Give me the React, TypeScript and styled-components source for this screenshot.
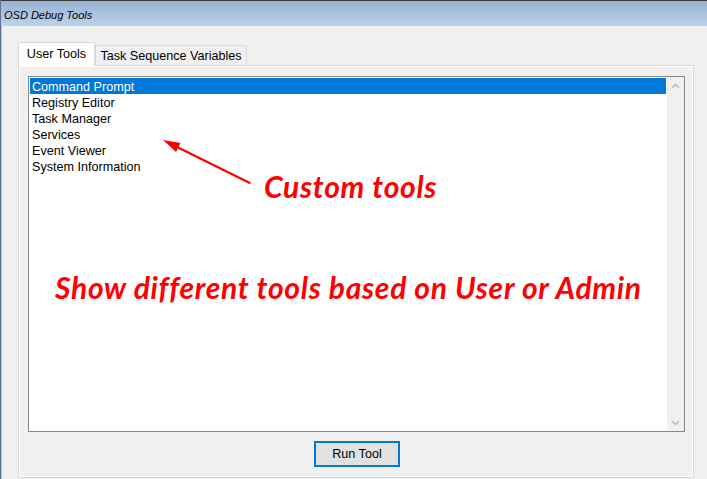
import React from 'react';
import styled, { createGlobalStyle } from 'styled-components';

const Global = createGlobalStyle`
  html, body { margin: 0; padding: 0; background: #f0f0f0; }
  body { font-family: "Liberation Sans", Arial, sans-serif; }
  * { box-sizing: border-box; }
`;

const Window = styled.div`
  position: relative;
  width: 707px;
  height: 479px;
  display: flex;
  flex-direction: column;
  background: #f0f0f0;
  border-left: 1px solid #5d7391;
  overflow: hidden;
`;

const TitleBar = styled.div`
  height: 26px;
  flex: none;
  border-top: 1px solid #3a3a3a;
  background: linear-gradient(#98b2d2, #bdd3eb);
  display: flex;
  align-items: center;
  padding: 2px 0 0 3px;
  font-style: italic;
  font-size: 11px;
  color: #000;
`;

const Body = styled.div`
  flex: 1;
  display: flex;
  flex-direction: column;
  padding: 16px 13px 1px 17px;
  box-shadow: inset 1px 0 0 #a9c1de;
`;

const TabStrip = styled.div`
  display: flex;
  align-items: flex-end;
  height: 24px;
  margin-bottom: -1px;
  position: relative;
  z-index: 1;
`;

const Tab = styled.div<{ $active?: boolean; $w: number }>`
  width: ${p => p.$w}px;
  height: ${p => (p.$active ? 24 : 20)}px;
  margin-bottom: ${p => (p.$active ? 0 : 1)}px;
  padding-top: ${p => (p.$active ? 3 : 2)}px;
  border: 1px solid #d9d9d9;
  border-bottom: none;
  background: ${p => (p.$active ? '#ffffff' : '#f0f0f0')};
  font-size: 12.6px;
  line-height: 16px;
  text-align: center;
  color: #000;
  white-space: nowrap;
`;

const Panel = styled.div`
  flex: 1;
  display: flex;
  flex-direction: column;
  gap: 9px;
  border: 1px solid #d9d9d9;
  box-shadow: inset 0 0 0 1px #ffffff;
  padding: 10px 8px 10px 9px;
  background: #f0f0f0;
`;

const ListBox = styled.div`
  flex: 1;
  display: flex;
  border: 1px solid #828790;
  background: #ffffff;
`;

const Items = styled.div`
  flex: 1;
  padding: 1px;
  display: flex;
  flex-direction: column;
`;

const Item = styled.div<{ $selected?: boolean }>`
  height: 16px;
  line-height: 16px;
  padding: 1px 0 0 2px;
  font-size: 12.6px;
  color: ${p => (p.$selected ? '#ffffff' : '#000000')};
  background: ${p => (p.$selected ? '#0078d7' : 'transparent')};
  white-space: nowrap;
  overflow: hidden;
`;

const ScrollBar = styled.div`
  width: 17px;
  flex: none;
  background: #f0f0f0;
  display: flex;
  flex-direction: column;
  justify-content: space-between;
`;

const ScrollButton = styled.div`
  height: 17px;
  display: flex;
  align-items: center;
  justify-content: center;
`;

const RunButton = styled.button`
  align-self: center;
  width: 86px;
  height: 26px;
  flex: none;
  border: 2px solid #0078d7;
  background: #e1e1e1;
  font-family: "Liberation Sans", Arial, sans-serif;
  font-size: 12.6px;
  color: #000;
  padding: 0;
  margin-right: -1px;
`;

const Note = styled.div<{ $x: number; $y: number }>`
  position: absolute;
  left: ${p => p.$x}px;
  top: ${p => p.$y}px;
  font-family: Lato, "Open Sans", sans-serif;
  font-weight: 700;
  font-style: italic;
  font-size: 30px;
  line-height: 30px;
  letter-spacing: 0.7px;
  color: #ff0000;
  white-space: nowrap;
  z-index: 2;
`;

const ArrowSvg = styled.svg`
  position: absolute;
  left: 150px;
  top: 125px;
  z-index: 2;
`;

const tools = [
  'Command Prompt',
  'Registry Editor',
  'Task Manager',
  'Services',
  'Event Viewer',
  'System Information',
];

const Chevron = ({ down }: { down?: boolean }) => (
  <svg width="9" height="6" viewBox="0 0 9 6">
    <path
      d={down ? 'M1 1.2 L4.5 4.6 L8 1.2' : 'M1 4.8 L4.5 1.4 L8 4.8'}
      fill="none"
      stroke="#c3c3c3"
      strokeWidth="1.8"
    />
  </svg>
);

export default function App() {
  return (
    <Window>
      <Global />
      <TitleBar>OSD Debug Tools</TitleBar>
      <Body>
        <TabStrip>
          <Tab $active $w={77}>User Tools</Tab>
          <Tab $w={152}>Task Sequence Variables</Tab>
        </TabStrip>
        <Panel>
          <ListBox>
            <Items>
              {tools.map((t, i) => (
                <Item key={t} $selected={i === 0}>{t}</Item>
              ))}
            </Items>
            <ScrollBar>
              <ScrollButton><Chevron /></ScrollButton>
              <ScrollButton><Chevron down /></ScrollButton>
            </ScrollBar>
          </ListBox>
          <RunButton>Run Tool</RunButton>
        </Panel>
      </Body>
      <ArrowSvg width="110" height="70" viewBox="0 0 110 70">
        <line x1="99.3" y1="58.3" x2="26" y2="22" stroke="#ff0000" strokeWidth="2.2" />
        <polygon points="12,15 29.5,18 25,27" fill="#ff0000" />
      </ArrowSvg>
      <Note $x={263} $y={171}>Custom tools</Note>
      <Note $x={54} $y={272}>Show different tools based on User or Admin</Note>
    </Window>
  );
}
